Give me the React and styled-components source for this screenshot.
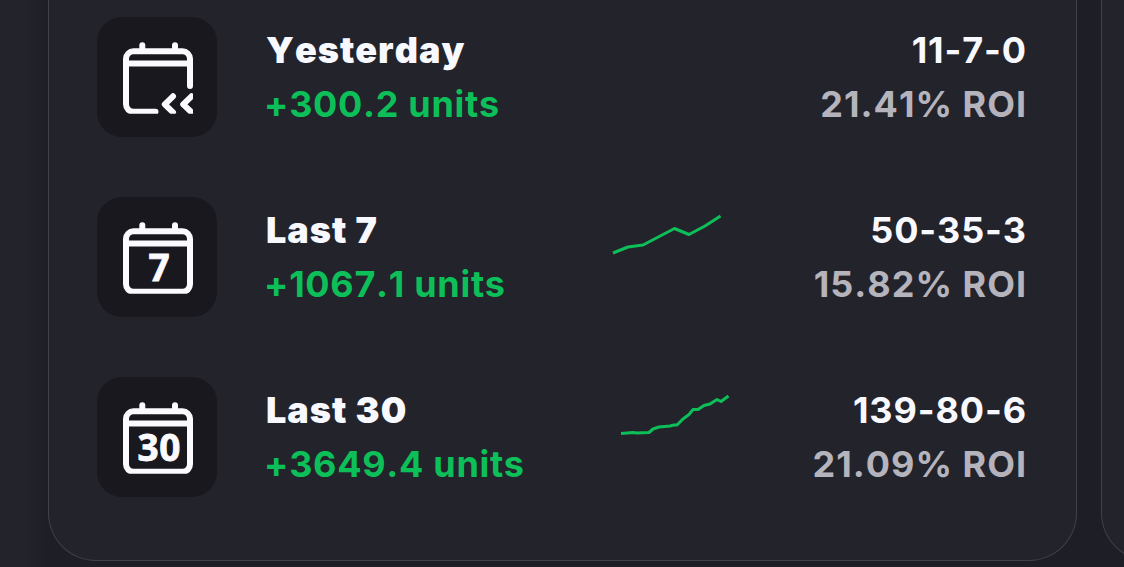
import styled, { createGlobalStyle } from "styled-components";

const rows = [
  {
    title: "Yesterday",
    units: "+300.2 units",
    record: "11-7-0",
    roi: "21.41% ROI",
  },
  {
    title: "Last 7",
    units: "+1067.1 units",
    record: "50-35-3",
    roi: "15.82% ROI",
    day: "7",
    chart: {
      gap: 65,
      points: "1,41 16,35 31,33 62.5,16.5 77,22.5 93,14 108.5,4",
    },
  },
  {
    title: "Last 30",
    units: "+3649.4 units",
    record: "139-80-6",
    roi: "21.09% ROI",
    day: "30",
    chart: {
      gap: 57,
      points:
        "1,41.5 13,40.5 17,41 29,40.5 33,37 39,35 50,34 54,33 57,33 63,27 69,22.5 73,17.5 78,17.5 84,13.5 90,12 97,7.5 101,9.5 108.5,4",
    },
  },
];

function CalendarIcon({ day }) {
  return (
    <svg width="120" height="120" viewBox="0 0 120 120" fill="none">
      <clipPath id="iconBounds">
        <rect x="26" y="24" width="70" height="72.7" />
      </clipPath>
      <g
        clipPath="url(#iconBounds)"
        stroke="#fbfaff"
        strokeWidth="6"
        strokeLinecap="round"
        strokeLinejoin="round"
      >
        <path d="M45.3 34V28.3M78 34V28.3M29 46.5H93" />
        {day ? (
          <rect x="29" y="34.3" width="64" height="60.5" rx="7.5" />
        ) : (
          <>
            <path d="M93 69V41.8A7.5 7.5 0 0 0 85.5 34.3H36.5A7.5 7.5 0 0 0 29 41.8V87.3A7.5 7.5 0 0 0 36.5 94.8H58.5" />
            <path d="M76 79.3L67.8 87.3L76 95.3M94.5 79.3L86.2 87.3L94.5 95.3" />
          </>
        )}
      </g>
      {day && (
        <IconDay x="62.3" y="83.5" textAnchor="middle">
          {day}
        </IconDay>
      )}
    </svg>
  );
}

function App() {
  return (
    <>
      <GlobalStyle />
      <Page>
        <SideEdge />
        <Card>
          {rows.map((row) => (
            <Row key={row.title}>
              <IconTile>
                <CalendarIcon day={row.day} />
              </IconTile>
              <Summary>
                <Title>{row.title}</Title>
                <Units>{row.units}</Units>
              </Summary>
              {row.chart && (
                <ChartSlot $gap={row.chart.gap}>
                  <svg width="110" height="46" viewBox="0 0 110 46" fill="none">
                    <polyline
                      points={row.chart.points}
                      stroke="#0dbf58"
                      strokeWidth="3"
                      strokeLinejoin="round"
                    />
                  </svg>
                </ChartSlot>
              )}
              <Results>
                <RecordText>{row.record}</RecordText>
                <Roi>{row.roi}</Roi>
              </Results>
            </Row>
          ))}
        </Card>
        <NextCard />
      </Page>
    </>
  );
}

export default App;

const GlobalStyle = createGlobalStyle`
  body {
    margin: 0;
    background: #1e1e27;
  }
`;

const Page = styled.div`
  display: flex;
  align-items: flex-start;
  width: 1124px;
  height: 567px;
  overflow: hidden;
  background: #1e1e27;
  font-family: "Inter", sans-serif;
`;

const SideEdge = styled.div`
  flex: none;
  width: 48px;
  height: 567px;
  background: linear-gradient(to right, #23232c 24px, #1e1e27 48px);
`;

const Card = styled.section`
  box-sizing: border-box;
  flex: none;
  display: flex;
  flex-direction: column;
  gap: 60px;
  width: 1029px;
  height: 561px;
  padding: 17px 49px 0 48px;
  border: 1px solid #42414b;
  border-top: 0;
  border-radius: 0 0 48px 48px;
  background: #23232c;
`;

const NextCard = styled(Card)`
  margin-left: 24px;
`;

const Row = styled.div`
  display: flex;
  height: 120px;
`;

const IconTile = styled.div`
  flex: none;
  width: 120px;
  height: 120px;
  border-radius: 25px;
  background: #19181e;
`;

const IconDay = styled.text`
  fill: #fbfaff;
  stroke: #fbfaff;
  stroke-width: 0.8px;
  font-family: "Open Sans", sans-serif;
  font-size: 37px;
  font-weight: 700;
  letter-spacing: 0.6px;
`;

const Summary = styled.div`
  flex: 1;
  padding: 6px 0 0 47px;
`;

const Line = styled.div`
  height: 54px;
  font-size: 36px;
  font-weight: 700;
  line-height: 54px;
  letter-spacing: 0.7px;
  font-kerning: none;
  white-space: nowrap;
`;

const Title = styled(Line)`
  padding-left: 2px;
  color: #f8f8ff;
  font-weight: 900;
  letter-spacing: 1px;
`;

const Units = styled(Line)`
  color: #0dbf58;
`;

const ChartSlot = styled.div`
  flex: none;
  width: 110px;
  margin-right: ${(props) => props.$gap}px;
  padding-top: 15px;
`;

const Results = styled.div`
  flex: none;
  width: 240px;
  padding-top: 6px;
  text-align: right;
`;

const RecordText = styled(Line)`
  color: #f8f8ff;
  letter-spacing: 0.9px;
`;

const Roi = styled(Line)`
  color: #b5b4bc;
  letter-spacing: 1px;
`;
